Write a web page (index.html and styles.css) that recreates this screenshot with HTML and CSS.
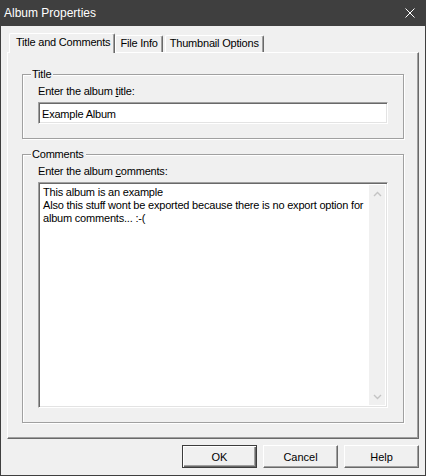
FILE: index.html
```html
<!doctype html>
<html>
<head>
  <title>Album Properties</title>
  <meta charset="utf-8"/>
  <link rel="stylesheet" href="styles.css">
</head>
<body>
  <div class="Window">
    <div class="Window__Titlebar">
      <span class="Window__Title">Album Properties</span>
      <svg class="Window__Close" width="10" height="10" viewBox="0 0 10 10">
        <path d="M0.5 0.5 L9.5 9.5 M9.5 0.5 L0.5 9.5" stroke="#fff" stroke-width="1" fill="none"/>
      </svg>
    </div>

    <div class="Window__Body">
      <div class="Tabs">
        <div class="Tab Tab--active">Title and Comments</div>
        <div class="Tab">File Info</div>
        <div class="Tab Tab--last">Thumbnail Options</div>
      </div>

      <div class="Panel">
        <fieldset class="Group">
          <legend class="Group__Legend">Title</legend>
          <label class="Group__Label" for="albumTitle">Enter the album <u>t</u>itle:</label>
          <input class="Field" id="albumTitle" type="text" value="Example Album">
        </fieldset>

        <fieldset class="Group Group--comments">
          <legend class="Group__Legend">Comments</legend>
          <label class="Group__Label" for="albumComments">Enter the album <u>c</u>omments:</label>
          <div class="Memo">
            <textarea class="Memo__Text" id="albumComments" wrap="off">This album is an example
Also this stuff wont be exported because there is no export option for
album comments... :-(</textarea>
            <div class="Memo__Scrollbar">
              <svg width="9" height="6" viewBox="0 0 9 6"><path d="M1 5 L4.5 1.5 L8 5" stroke="#c4c4c4" stroke-width="1.4" fill="none"/></svg>
              <svg width="9" height="6" viewBox="0 0 9 6"><path d="M1 1 L4.5 4.5 L8 1" stroke="#c4c4c4" stroke-width="1.4" fill="none"/></svg>
            </div>
          </div>
        </fieldset>
      </div>

      <div class="Buttons">
        <button class="Button Button--default">OK</button>
        <button class="Button">Cancel</button>
        <button class="Button">Help</button>
      </div>
    </div>
  </div>
</body>
</html>
```

FILE: styles.css
```css
html, body {
  margin: 0;
  padding: 0;
}

body {
  background-color: #f0f0f0;
  font-family: "Liberation Sans", Arial, sans-serif;
  font-size: 11px;
  letter-spacing: -0.2px;
  color: #000;
}

.Window {
  width: 426px;
  height: 476px;
  box-sizing: border-box;
  border: 1px solid #3f3f3f;
  border-top: 0;
  display: flex;
  flex-direction: column;
  background-color: #f0f0f0;
}

.Window__Titlebar {
  height: 26px;
  margin: 0 -1px;
  padding: 0 11px 0 4px;
  background-color: #3f3f3f;
  display: flex;
  align-items: center;
  justify-content: space-between;
}
.Window__Title {
  color: #fff;
  font-size: 12px;
  letter-spacing: 0;
  margin-top: -1px;
}
.Window__Close {
  display: block;
  margin-top: -1px;
}

.Window__Body {
  flex: 1;
  display: flex;
  flex-direction: column;
  padding: 7px 6px 0;
}

/* tab strip */
.Tabs {
  display: flex;
  align-items: flex-end;
  height: 19px;
  padding-left: 2px;
  position: relative;
  z-index: 1;
}
.Tab {
  height: 17px;
  box-sizing: border-box;
  padding: 1px 4px 0;
  margin-right: 2px;
  line-height: 13px;
  border-top: 1px solid #fff;
  border-left: 1px solid #fff;
  border-right: 1px solid #696969;
  border-radius: 2px 2px 0 0;
  box-shadow: inset -1px 0 0 #a0a0a0;
  background-color: #f0f0f0;
  white-space: nowrap;
}
.Tab--active {
  height: 20px;
  margin-bottom: -1px;
  margin-right: 0;
  padding: 2px 4px 0 6px;
}

.Panel {
  flex: 1;
  box-sizing: border-box;
  border-top: 1px solid #fff;
  border-left: 1px solid #fff;
  border-right: 1px solid #696969;
  border-bottom: 1px solid #696969;
  box-shadow: inset -1px -1px 0 #a0a0a0;
  padding: 15px 14px 0;
}

/* etched group boxes */
.Group {
  margin: 0;
  padding: 4px 15px 14px;
  border: 1px solid #a0a0a0;
  box-shadow: 1px 1px 0 #fff, inset 1px 1px 0 #fff;
  min-width: 0;
}
.Group--comments {
  margin-top: 9px;
}
.Group__Legend {
  padding: 0 2px 0 1px;
  margin-left: -7px;
  line-height: 13px;
  background-color: #f0f0f0;
}
.Group__Label {
  display: block;
  line-height: 13px;
  margin-bottom: 4px;
}
.Group__Label u {
  text-decoration-thickness: 1px;
}

/* sunken edit fields */
.Field,
.Memo {
  display: block;
  box-sizing: border-box;
  width: 100%;
  border-top: 1px solid #a0a0a0;
  border-left: 1px solid #a0a0a0;
  border-right: 1px solid #fff;
  border-bottom: 1px solid #fff;
  box-shadow: inset 1px 1px 0 #696969, inset -1px -1px 0 #e3e3e3;
  background-color: #fff;
}
.Field {
  height: 22px;
  margin: 0;
  padding: 1px 3px 0;
  font: inherit;
  letter-spacing: inherit;
  color: #000;
  outline: none;
}

.Memo {
  height: 226px;
  display: flex;
  padding: 2px;
}
.Memo__Text {
  flex: 1;
  margin: 0;
  border: 0;
  padding: 1px 2px 0;
  font: inherit;
  letter-spacing: inherit;
  line-height: 13px;
  color: #000;
  resize: none;
  overflow: hidden;
  outline: none;
  background: transparent;
}
.Memo__Scrollbar {
  width: 16px;
  background-color: #f0f0f0;
  display: flex;
  flex-direction: column;
  justify-content: space-between;
  align-items: center;
  padding: 6px 0 5px;
}
.Memo__Scrollbar svg {
  display: block;
}

/* dialog buttons */
.Buttons {
  display: flex;
  justify-content: flex-end;
  gap: 6px;
  margin: 6px 0 7px;
}
.Button {
  width: 75px;
  height: 23px;
  margin: 0;
  padding: 0;
  box-sizing: border-box;
  font: inherit;
  letter-spacing: 0;
  color: #000;
  background-color: #f0f0f0;
  border-top: 1px solid #fff;
  border-left: 1px solid #fff;
  border-right: 1px solid #696969;
  border-bottom: 1px solid #696969;
  box-shadow: inset -1px -1px 0 #a0a0a0;
}
.Button--default {
  border: 1px solid #3c3c3c;
  box-shadow: inset 1px 1px 0 #fff, inset -1px -1px 0 #696969, inset -2px -2px 0 #a0a0a0;
}
```
